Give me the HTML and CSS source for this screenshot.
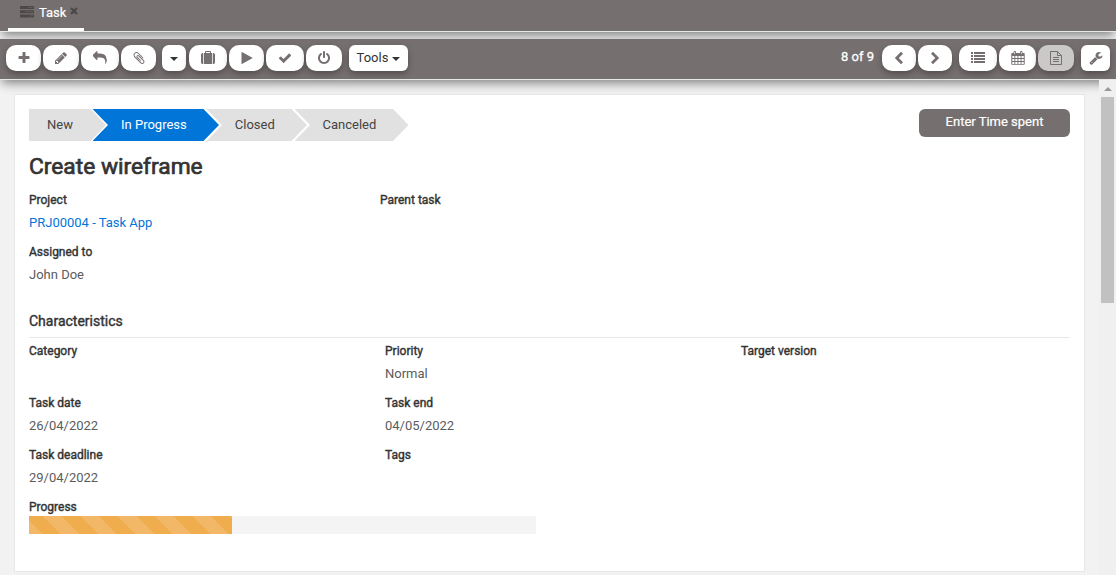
FILE: index.html
```html
<!DOCTYPE html>
<html lang="en">
<head>
<meta charset="utf-8">
<title>Task</title>
<link rel="stylesheet" href="styles.css">
</head>
<body>
<header class="tabs">
  <div class="tab">
    <svg class="tab-icon" width="14" height="12" viewBox="0 0 14 12"><path fill="#4c4848" d="M0 0h14v3H0zM0 4.200h14v3H0zM0 8.400h14v3H0z"/><path stroke="#6a6565" stroke-width=".7" d="M8 1.500h5M5 5.700h8M10 9.900h3"/></svg>
    <span class="tab-title">Task</span>
    <svg class="tab-close" width="8" height="8" viewBox="0 0 8 8"><path stroke="#4c4848" stroke-width="2.300" d="M1 1l6 6M7 1L1 7"/></svg>
  </div>
</header>
<nav class="toolbar">
  <div class="group">
    <button class="btn w35"><svg width="14" height="14" viewBox="0 0 1792 1792"><path d="M1600 736v192q0 40-28 68t-68 28h-416v416q0 40-28 68t-68 28h-192q-40 0-68-28t-28-68v-416h-416q-40 0-68-28t-28-68v-192q0-40 28-68t68-28h416v-416q0-40 28-68t68-28h192q40 0 68 28t28 68v416h416q40 0 68 28t28 68z"/></svg></button>
    <button class="btn w36"><svg width="14" height="14" viewBox="0 0 1792 1792"><path d="M491 1536l91-91-235-235-91 91v107h128v128h107zm523-928q0-22-22-22-10 0-17 7l-542 542q-7 7-7 17 0 22 22 22 10 0 17-7l542-542q7-7 7-17zm-54-192l416 416-832 832h-416v-416zm683 96q0 53-37 90l-166 166-416-416 166-165q36-38 90-38 53 0 91 38l235 234q37 39 37 91z"/></svg></button>
    <button class="btn w38"><svg width="14" height="14" viewBox="0 0 1792 1792"><path d="M1792 1120q0 166-127 451-3 7-10.5 24t-13.5 30-13 22q-12 17-28 17-15 0-23.5-10t-8.5-25q0-9 2.5-26.5t2.5-23.5q5-68 5-123 0-112-19.5-200.5t-54-153.5-89-112-117.5-79.5-146.5-46-168.5-19-190-5.5h-224v256q0 26-19 45t-45 19-45-19l-512-512q-19-19-19-45t19-45l512-512q19-19 45-19t45 19 19 45v256h224q713 0 875 403 53 134 53 333z"/></svg></button>
    <button class="btn w35"><svg width="14" height="14" viewBox="0 0 1792 1792"><path d="M1596 1385q0 117-79 196t-196 79q-135 0-235-100l-777-776q-113-115-113-271 0-159 110-270t269-111q158 0 273 113l605 606q10 10 10 22 0 16-30.5 46.5t-46.5 30.5q-13 0-23-10l-606-607q-79-77-181-77-106 0-179 75t-73 181q0 105 76 181l776 777q63 63 145 63 64 0 106-42t42-106q0-82-63-145l-581-581q-26-24-60-24-29 0-48 19t-19 48q0 32 25 59l410 410q10 10 10 22 0 16-31 47t-47 31q-12 0-22-10l-410-410q-63-61-63-149 0-82 57-139t139-57q88 0 149 63l581 581q100 98 100 235z"/></svg></button>
  </div>
  <div class="group after-attach">
    <button class="btn w24"><span class="caret"></span></button>
  </div>
  <div class="group after-caret">
    <button class="btn w38"><svg width="14" height="14" viewBox="0 0 1792 1792"><path d="M640 256h512v-128h-512v128zm-352 0v1408h-64q-92 0-158-66t-66-158v-960q0-92 66-158t158-66h64zm1120 0v1408h-1024v-1408h128v-160q0-40 28-68t68-28h576q40 0 68 28t28 68v160h128zm384 224v960q0 92-66 158t-158 66h-64v-1408h64q92 0 158 66t66 158z"/></svg></button>
    <button class="btn w35"><svg width="14" height="14" viewBox="0 0 1792 1792"><path d="M1576 927l-1328 738q-23 13-39.5 3t-16.5-36v-1472q0-26 16.5-36t39.5 3l1328 738q23 13 23 31t-23 31z"/></svg></button>
    <button class="btn w38"><svg width="14" height="14" viewBox="0 0 1792 1792"><path d="M1671 566q0 40-28 68l-724 724-136 136q-28 28-68 28t-68-28l-136-136-362-362q-28-28-28-68t28-68l136-136q28-28 68-28t68 28l294 295 656-657q28-28 68-28t68 28l136 136q28 28 28 68z"/></svg></button>
    <button class="btn w36"><svg width="14" height="14" viewBox="0 0 1792 1792"><path d="M1664 896q0 156-61 298t-164 245-245 164-298 61-298-61-245-164-164-245-61-298q0-182 80.5-343t226.5-270q43-32 95.5-25t83.5 50q32 42 24.5 94.5t-49.5 84.5q-98 74-151.5 181t-53.5 228q0 104 40.5 198.5t109.5 163.5 163.5 109.5 198.5 40.5 198.5-40.5 163.5-109.5 109.5-163.5 40.5-198.5q0-121-53.5-228t-151.5-181q-42-32-49.5-84.5t24.5-94.5q31-43 84-50t95 25q146 109 226.5 270t80.5 343zm-640-768v640q0 52-38 90t-90 38-90-38-38-90v-640q0-52 38-90t90-38 90 38 38 90z"/></svg></button>
  </div>
  <div class="group after-power">
    <button class="btn tools">Tools<span class="caret"></span></button>
  </div>
  <div class="right">
    <span class="pager">8 of 9</span>
    <div class="group">
      <button class="btn w34"><svg width="14" height="14" viewBox="0 0 14 14"><path class="chevron" d="M10 1.800L4.800 7l5.200 5.200"/></svg></button>
      <button class="btn w34"><svg width="14" height="14" viewBox="0 0 14 14"><path class="chevron" d="M4 1.800L9.200 7 4 12.200"/></svg></button>
    </div>
    <div class="group views">
      <button class="btn w38"><svg width="14" height="12" viewBox="0 0 14 12"><path d="M0 0h2v2H0zM3 0h11v2H3zM0 3h2v2H0zM3 3h11v2H3zM0 6h2v2H0zM3 6h11v2H3zM0 9h2v2H0zM3 9h11v2H3z"/></svg></button>
      <button class="btn w37"><svg width="14" height="14" viewBox="0 0 14 14"><path fill-rule="evenodd" d="M1 2h1.500V1q0-1 1.250-1T5 1v1h4V1q0-1 1.250-1T11.500 1v1H13q.7 0 .7.700V13q0 .8-.7.8H1q-.7 0-.7-.8V2.700Q.3 2 1 2zM1.300 5v2h2.100V5zm3 0v2h2.200V5zm3.100 0v2h2.200V5zm3.100 0v2h2.200V5zM1.300 8v2h2.100V8zm3 0v2h2.200V8zm3.100 0v2h2.200V8zm3.100 0v2h2.200V8zM1.300 11v1.900h2.100V11zm3 0v1.900h2.200V11zm3.100 0v1.900h2.200V11zm3.100 0v1.900h2.200V11zM3.400 1v2h.7V1zm6.500 0v2h.7V1z"/></svg></button>
      <button class="btn w36 active"><svg width="14" height="14" viewBox="0 0 14 14"><path class="line" d="M1.500.5h7l4 4v9h-11zM8.500.5v4h4M4 6.500h6M4 8.500h6M4 10.500h6"/></svg></button>
    </div>
    <button class="btn wrench"><svg width="14" height="14" viewBox="0 0 1792 1792"><path d="M448 1472q0-26-19-45t-45-19-45 19-19 45 19 45 45 19 45-19 19-45zm644-420l-682 682q-37 37-90 37-52 0-91-37l-106-108q-38-36-38-90 0-53 38-91l681-681q39 98 114.500 173.500t173.500 114.500zm634-435q0 39-23 106-47 134-164.500 217.500t-258.500 83.500q-185 0-316.500-131.500t-131.500-316.500 131.500-316.500 316.500-131.500q58 0 121.500 16.500t107.500 46.500q16 11 16 28t-16 28l-293 169v224l193 107q5-3 79-48.500t135.500-81 70.500-35.500q15 0 23.500 10t8.500 25z"/></svg></button>
  </div>
</nav>
<div class="view">
  <main class="content">
    <section class="card">
      <div class="card-head">
        <div class="steps">
          <div class="step new">New</div>
          <div class="step progress-step">In Progress</div>
          <div class="step closed">Closed</div>
          <div class="step canceled">Canceled</div>
        </div>
        <button class="time">Enter Time spent</button>
      </div>
      <h1>Create wireframe</h1>
      <div class="grid summary">
        <div class="field"><label>Project</label><a class="value">PRJ00004 - Task App</a></div>
        <div class="field"><label>Parent task</label></div>
        <div class="field"></div>
        <div class="field"><label>Assigned to</label><span class="value">John Doe</span></div>
      </div>
      <h2>Characteristics</h2>
      <div class="grid details">
        <div class="field"><label>Category</label></div>
        <div class="field"><label>Priority</label><span class="value">Normal</span></div>
        <div class="field"><label>Target version</label></div>
        <div class="field"><label>Task date</label><span class="value">26/04/2022</span></div>
        <div class="field"><label>Task end</label><span class="value">04/05/2022</span></div>
        <div class="field"></div>
        <div class="field"><label>Task deadline</label><span class="value">29/04/2022</span></div>
        <div class="field"><label>Tags</label></div>
      </div>
      <label>Progress</label>
      <div class="bar"><div class="fill" style="width:40%"></div></div>
    </section>
  </main>
  <aside class="scrollbar"><span class="arrow"></span><div class="thumb"></div></aside>
</div>
</body>
</html>
```
FILE: styles.css
```css
* { box-sizing: border-box; }
body {
  margin: 0;
  height: 575px;
  overflow: hidden;
  display: flex;
  flex-direction: column;
  background: #f2f2f2;
  color: #333;
  font: 13px/20px Roboto, sans-serif;
}
button { font: inherit; border: 0; padding: 0; margin: 0; }
.tabs {
  flex: none;
  height: 32px;
  margin-bottom: 7px;
  padding-left: 8px;
  background: #766f6f;
  border-bottom: 1px solid #e7e7e7;
  box-shadow: 0 5px 10px -2px rgba(0, 0, 0, .48);
}
.tab {
  display: flex;
  width: 76px;
  height: 31px;
  padding-left: 12px;
  border-bottom: 3px solid #fff;
  color: #fff;
}
.tab-icon { margin-top: 6px; }
.tab-title { margin: 3px 4px 0 5px; -webkit-text-stroke: .2px; }
.tab-close { margin-top: 7px; }
.toolbar {
  position: relative;
  z-index: 1;
  flex: none;
  display: flex;
  height: 41px;
  padding: 6px 6px 0;
  background: #766f6f;
  border-bottom: 1px solid #e7e7e7;
  box-shadow: 0 5px 10px -2px rgba(0, 0, 0, .48);
}
.group { display: flex; gap: 2px; }
.after-attach { margin-left: 6px; }
.after-caret { margin-left: 3px; }
.after-power { margin-left: 7px; }
.btn {
  display: flex;
  align-items: center;
  justify-content: center;
  height: 26px;
  border-radius: 10px;
  background: #fff;
  color: #333;
  box-shadow: 0 3px 6px rgba(0, 0, 0, .3);
}
.btn svg { fill: #766f6f; }
.btn .chevron { fill: none; stroke: #766f6f; stroke-width: 2.800; }
.btn .line { fill: none; stroke: #766f6f; stroke-width: 1; }
.w24 { width: 24px; border-radius: 7px; }
.w34 { width: 34px; }
.w35 { width: 35px; }
.w36 { width: 36px; }
.w37 { width: 37px; }
.w38 { width: 38px; }
.active { background: #cbc8c8; }
.tools { width: 59px; gap: 4px; border-radius: 6px; }
.caret {
  border: 4px solid transparent;
  border-top-color: #333;
  border-bottom: 0;
  margin-top: 2px;
}
.right { display: flex; margin-left: auto; }
.pager { margin: 2px 8px 0 0; color: #fff; -webkit-text-stroke: .3px; }
.views { margin-left: 7px; }
.wrench { width: 29px; margin-left: 7px; border-radius: 6px; }
.view { flex: 1; display: flex; min-height: 0; }
.content { flex: 1; padding: 14px 14px 3px; }
.card {
  height: 478px;
  padding: 14px;
  background: #fff;
  border: 1px solid #e7e7e7;
}
.card-head { display: flex; justify-content: space-between; height: 32px; }
.steps { display: flex; }
.step {
  height: 32px;
  line-height: 32px;
  margin-left: -12.500px;
  background: #e1e1e1;
  color: #444;
  clip-path: polygon(0 0, calc(100% - 15.500px) 0, 100% 50%, calc(100% - 15.500px) 100%, 0 100%, 15.500px 50%);
}
.new {
  width: 77px;
  margin-left: 0;
  padding-left: 18px;
  clip-path: polygon(0 0, calc(100% - 15.500px) 0, 100% 50%, calc(100% - 15.500px) 100%, 0 100%);
}
.progress-step { width: 126.500px; margin-left: -13.500px; padding-left: 28.500px; background: #0275d8; color: #fff; }
.closed { width: 100.500px; padding-left: 28.300px; }
.canceled { width: 114px; padding-left: 28px; }
.time {
  width: 151px;
  height: 28px;
  padding-bottom: 2px;
  border-radius: 6px;
  background: #766f6f;
  color: #fff;
  -webkit-text-stroke: .2px;
}
h1 { margin: 12px 0 11px; font-size: 22.750px; line-height: 28px; font-weight: 400; -webkit-text-stroke: .7px; }
h2 {
  margin: 0 0 5px;
  padding-bottom: 6px;
  border-bottom: 1px solid #e7e7e7;
  font-size: 14px;
  line-height: 20px;
  font-weight: 400;
  -webkit-text-stroke: .4px;
}
.grid { display: grid; grid-auto-rows: 52px; }
.summary { grid-template-columns: 351px 1fr 1fr; height: 119px; }
.details { grid-template-columns: 356px 356px 1fr; }
label { display: block; font-size: 12px; line-height: 17px; -webkit-text-stroke: .4px; }
.value { display: block; margin-top: 4px; line-height: 20px; color: #5c5c5c; }
a.value { color: #0275d8; }
.bar { width: 507px; height: 18px; background: #f4f4f4; }
.fill {
  height: 18px;
  background: repeating-linear-gradient(45deg, #f2b868 0 9.300px, #f0ad4e 9.300px 22.600px, #f2b868 22.600px 26.400px);
}
.scrollbar {
  position: relative;
  z-index: 2;
  width: 17px;
  padding: 7px 2px 0;
  background: #f0f0f0;
}
.arrow {
  display: block;
  width: 8px;
  margin: 0 auto 6px;
  border: 4px solid transparent;
  border-top: 0;
  border-bottom-color: #999;
}
.thumb { height: 206px; background: #c1c1c1; }
```
